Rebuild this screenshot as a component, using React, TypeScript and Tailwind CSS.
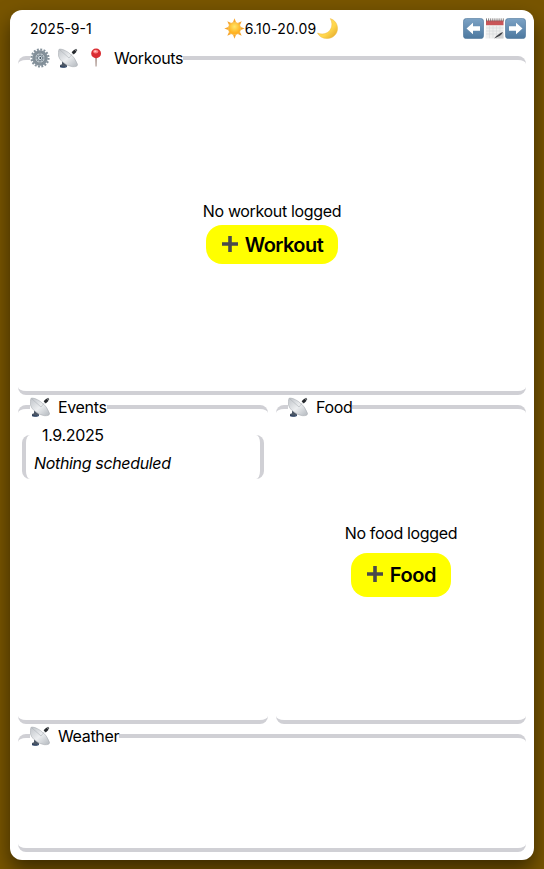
import type { ReactNode } from "react";

function Gear() {
  return (
    <svg viewBox="0 0 20 20" className="h-5 w-5 shrink-0">
      <circle cx="10" cy="10" r="8.5" fill="none" stroke="#84919b" strokeWidth="2.2" strokeDasharray="1.9 1.437" />
      <circle cx="10" cy="10" r="6.6" fill="none" stroke="#83909a" strokeWidth="2.4" />
      <circle cx="10" cy="10" r="5.3" fill="#b6c0c7" stroke="#66737c" strokeWidth=".8" />
      <path d="M10 5v10M5 10h10M6.500 6.500l7 7M13.500 6.500l-7 7" stroke="#7d8a94" strokeWidth=".9" />
      <circle cx="10" cy="10" r="2.5" fill="#dbe5ec" stroke="#5d6c78" strokeWidth=".8" />
      <circle cx="10.300" cy="10" r=".9" fill="#34424e" />
    </svg>
  );
}

function Dish() {
  return (
    <svg viewBox="0 0 20 20" className="h-5 w-5 shrink-0">
      <defs>
        <linearGradient id="dish" x1="0" y1="0" x2="1" y2="1">
          <stop offset="0" stopColor="#bfc3c8" />
          <stop offset=".5" stopColor="#eceef0" />
          <stop offset="1" stopColor="#b3b8be" />
        </linearGradient>
      </defs>
      <path d="M4 12.5h4l1 5.5q-3.500 2-7 .7V17l2-.8z" fill="#4b5665" />
      <path d="M2 18q3.500 1.400 7 0v.9q-3.500 1.500-7 .4z" fill="#243c60" />
      <path d="M1 1.300Q4 .3 10.500 4.500T19.600 16.500Q19.500 19 14.500 18.700T4 13.500T1 1.300Z" fill="url(#dish)" stroke="#a2a7ad" strokeWidth=".5" />
      <path d="M2 2L11 10M11 10L15.500 4.500" fill="none" stroke="#afb3b8" strokeWidth=".6" />
      <path d="M14.700 5.300L17.500 2.600" stroke="#25282c" strokeWidth="3.100" />
      <path d="M17.500 2.500L18.700 1.500" stroke="#45494d" strokeWidth="2" />
    </svg>
  );
}

function Pin() {
  return (
    <svg viewBox="0 0 20 20" className="h-5 w-5 shrink-0">
      <path d="M9.300 9h1.500l-.3 9.500h-.9z" fill="#9a8078" />
      <circle cx="10.100" cy="5.400" r="4.900" fill="#d92d32" />
      <ellipse cx="9.700" cy="3.600" rx="2.600" ry="1.900" fill="#ff8585" />
      <ellipse cx="9.300" cy="3.300" rx="1.200" ry=".8" fill="#ffd1cd" />
    </svg>
  );
}

function Sun() {
  return (
    <svg viewBox="0 0 21 21" className="h-[21px] w-[21px] shrink-0">
      <defs>
        <radialGradient id="sun" cx=".5" cy=".35">
          <stop offset="0" stopColor="#ffe66a" />
          <stop offset="1" stopColor="#ffb322" />
        </radialGradient>
      </defs>
      <g fill="#f6a52d">
        <path d="M10.500.3l1.500 4h-3zM10.500 20.700l-1.500-4h3zM.3 10.500l4-1.500v3zM20.700 10.500l-4 1.500v-3z" />
        <path d="M3.300 3.300l3.900 1.800-2.100 2.100zM17.700 3.300l-1.800 3.900-2.100-2.100zM3.300 17.700l1.800-3.900 2.100 2.100zM17.700 17.700l-3.900-1.800 2.100-2.100z" />
      </g>
      <circle cx="10.500" cy="10.500" r="6.200" fill="url(#sun)" stroke="#f4ae32" strokeWidth=".5" />
    </svg>
  );
}

function Moon() {
  return (
    <svg viewBox="0 0 21 21" className="ml-px h-[21px] w-[21px] shrink-0">
      <defs>
        <linearGradient id="moon" x1="0" y1="0" x2="1" y2="1">
          <stop offset=".2" stopColor="#ffdc5d" />
          <stop offset=".6" stopColor="#ffd64c" />
          <stop offset="1" stopColor="#dea126" />
        </linearGradient>
      </defs>
      <path d="M13.300.6C18 2.200 20.500 6 20.500 10.500C20.500 16 16 20.500 10.200 20.500C5.500 20.500 2.200 18.500.5 15C5 17 10 15.800 12.700 12.500C15.500 9 15.500 4.800 13.300.6Z" fill="url(#moon)" stroke="#eeb93c" strokeWidth=".5" />
    </svg>
  );
}

function ArrowKey({ right = false }: { right?: boolean }) {
  return (
    <svg viewBox="0 0 21 21" className="h-[21px] w-[21px] shrink-0">
      <defs>
        <linearGradient id="key" x1="0" y1="0" x2="0" y2="1">
          <stop offset="0" stopColor="#7da3c5" />
          <stop offset="1" stopColor="#4c789f" />
        </linearGradient>
      </defs>
      <rect x=".4" y=".4" width="20.200" height="20.200" rx="3.200" fill="url(#key)" stroke="#557b9d" strokeWidth=".7" />
      <path d={right ? "M17.500 10.500l-6.500-5.700v3.400H4v4.600h7v3.400z" : "M3.500 10.500l6.500-5.700v3.400h7v4.600h-7v3.400z"} fill="#fff" />
    </svg>
  );
}

function Calendar() {
  return (
    <svg viewBox="0 0 21 21" className="h-[21px] w-[21px] shrink-0">
      <path d="M2 2.500h17.500V20.500H1.500z" fill="#f0f0ef" />
      <path d="M2 2.500h17.500v4.700H2z" fill="#c95558" />
      <path d="M2 10h17.500M2 13h17.500M2 16h17.500M5.500 7.200v13M9 7.200v13M12.500 7.200v13M16 7.200v13" stroke="#d5d7d8" strokeWidth=".6" />
      <path d="M2.500.4v3M4.600.4v3M6.700.4v3M8.800.4v3M10.900.4v3M13 .4v3M15.100.4v3M17.200.4v3M19.300.4v3" stroke="#625d5d" strokeWidth=".8" />
      <path d="M19.500 14.500v6H10q4-.5 5-2.500z" fill="#d0d1d2" />
      <path d="M10 20.500q5-5.500 9-6.500-1 3.500-9 6.500z" fill="#3f4145" />
    </svg>
  );
}

function Plus() {
  return (
    <svg viewBox="0 0 18 18" className="mb-0.5 h-[18px] w-[18px] shrink-0">
      <path d="M7.200 1h3.600v6.200H17v3.600h-6.200V17H7.200v-6.200H1V7.200h6.200z" fill="#4a4a4b" />
    </svg>
  );
}

function Panel({ title, icons, className, children }: { title: string; icons: ReactNode; className: string; children?: ReactNode }) {
  return (
    <fieldset className={`min-w-0 rounded-lg border-y-4 border-[#d0d0d5] p-1 ${className}`}>
      <legend className="ml-2 flex h-6 items-center gap-2 leading-6">
        {icons}
        <span>{title}</span>
      </legend>
      {children}
    </fieldset>
  );
}

export default function App() {
  return (
    <div className="h-[869px] w-[544px] overflow-hidden bg-[#785500] p-2.5 font-['Inter',sans-serif] text-base tracking-[-0.34px] text-black">
      <main className="flex h-[850px] flex-col rounded-xl bg-white p-2 shadow-[0_10px_20px_rgba(0,0,0,0.5)]">
        <header className="grid h-7 shrink-0 grid-cols-3 items-center pb-2 text-sm">
          <span className="pl-3 tracking-normal">2025-9-1</span>
          <span className="flex items-center justify-center pl-[18px]">
            <Sun />
            <span className="whitespace-nowrap tracking-[0.2px]">6.10-20.09</span>
            <Moon />
          </span>
          <span className="flex justify-end">
            <ArrowKey />
            <Calendar />
            <ArrowKey right />
          </span>
        </header>
        <Panel title="Workouts" icons={<><Gear /><Dish /><Pin /></>} className="h-[349px] shrink-0">
          <div className="flex flex-col items-center gap-0.5 pt-[125px]">
            <p>No workout logged</p>
            <button className="flex h-[39px] w-[132px] items-center justify-center gap-1.5 rounded-2xl bg-[yellow] text-xl font-semibold tracking-[-0.55px]">
              <Plus />
              Workout
            </button>
          </div>
        </Panel>
        <div className="grid h-[329px] shrink-0 grid-cols-2 gap-2">
          <Panel title="Events" icons={<Dish />} className="h-full">
            <fieldset className="h-14 rounded-lg border-x-4 border-[#d0d0d5] px-2 py-1">
              <legend className="ml-2 leading-6">1.9.2025</legend>
              <p className="italic">Nothing scheduled</p>
            </fieldset>
          </Panel>
          <Panel title="Food" icons={<Dish />} className="h-full">
            <div className="flex flex-col items-center gap-2 pt-[98px]">
              <p>No food logged</p>
              <button className="flex h-11 w-[100px] items-center justify-center gap-1.5 rounded-2xl bg-[yellow] text-xl font-semibold tracking-[-0.4px]">
                <Plus />
                Food
              </button>
            </div>
          </Panel>
        </div>
        <Panel title="Weather" icons={<Dish />} className="h-[128px] shrink-0" />
      </main>
    </div>
  );
}
